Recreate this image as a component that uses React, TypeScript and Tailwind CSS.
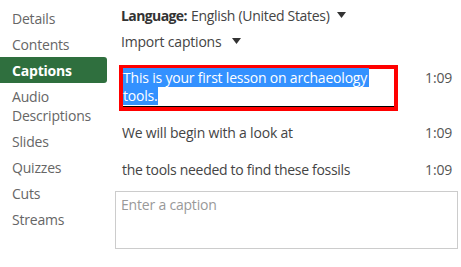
import React from "react";

const font = { fontFamily: '"Open Sans", "Noto Sans", sans-serif' };

function Caret({ className = "" }: { className?: string }) {
  return (
    <svg width="9" height="6" viewBox="0 0 9 6" className={className}>
      <path d="M0 0 H9 L4.5 6 Z" fill="#333" />
    </svg>
  );
}

const navItems = ["Details", "Contents", "Captions", "Audio Descriptions", "Slides", "Quizzes", "Cuts", "Streams"];

export default function App() {
  return (
    <div
      className="flex w-[461px] h-[267px] bg-white text-[14px] tracking-[-0.2px] overflow-hidden"
      style={font}
    >
      {/* sidebar */}
      <div className="w-[107px] shrink-0 pt-[5px]">
        {navItems.map((item) =>
          item === "Captions" ? (
            <div
              key={item}
              className="pl-[12px] py-[3.5px] leading-[19px] bg-[#2f6f3e] text-white font-bold rounded-r-[3px]"
            >
              {item}
            </div>
          ) : (
            <div key={item} className="pl-[12px] pr-2 py-[3.5px] leading-[19px] text-[#666]">
              {item}
            </div>
          )
        )}
      </div>

      {/* main */}
      <div className="ml-[8px] w-[343px] pt-[2px] text-[#444]">
        <div className="pl-[6px] py-[3.5px] leading-[19px] flex items-center">
          <span className="font-bold text-[#333] tracking-[-0.6px]">Language:</span>
          <span className="ml-[4px] tracking-[-0.3px]">English (United States)</span>
          <Caret className="ml-[7px]" />
        </div>
        <div className="pl-[6px] py-[3.5px] leading-[19px] flex items-center">
          <span>Import captions</span>
          <Caret className="ml-[11px]" />
        </div>

        <div className="mt-[11px] flex items-start">
          <div className="ml-[4px] w-[279px] h-[46px] border-[4.5px] border-[#ff0000] bg-white">
            <div className="h-full border-b border-black leading-[18px] text-white">
              <span className="bg-[#3391ff] pr-[2px]">This is your first lesson on archaeology</span>
              <br />
              <span className="bg-[#3391ff]">tools.</span>
            </div>
          </div>
          <div className="ml-auto mr-[6px] mt-[3px] leading-[19px] text-[#555]">1:09</div>
        </div>

        <div className="mt-[3px] h-[37px] flex items-center pl-[7px] pr-[6px]">
          <span>We will begin with a look at</span>
          <span className="ml-auto text-[#555]">1:09</span>
        </div>
        <div className="h-[37px] flex items-center pl-[7px] pr-[6px]">
          <span className="tracking-[-0.3px]">the tools needed to find these fossils</span>
          <span className="ml-auto text-[#555]">1:09</span>
        </div>

        <div className="mt-[3px] h-[58px] border border-[#ccc] px-[5px] pt-[3px] leading-[19px] text-[#999]">
          Enter a caption
        </div>
      </div>
    </div>
  );
}
